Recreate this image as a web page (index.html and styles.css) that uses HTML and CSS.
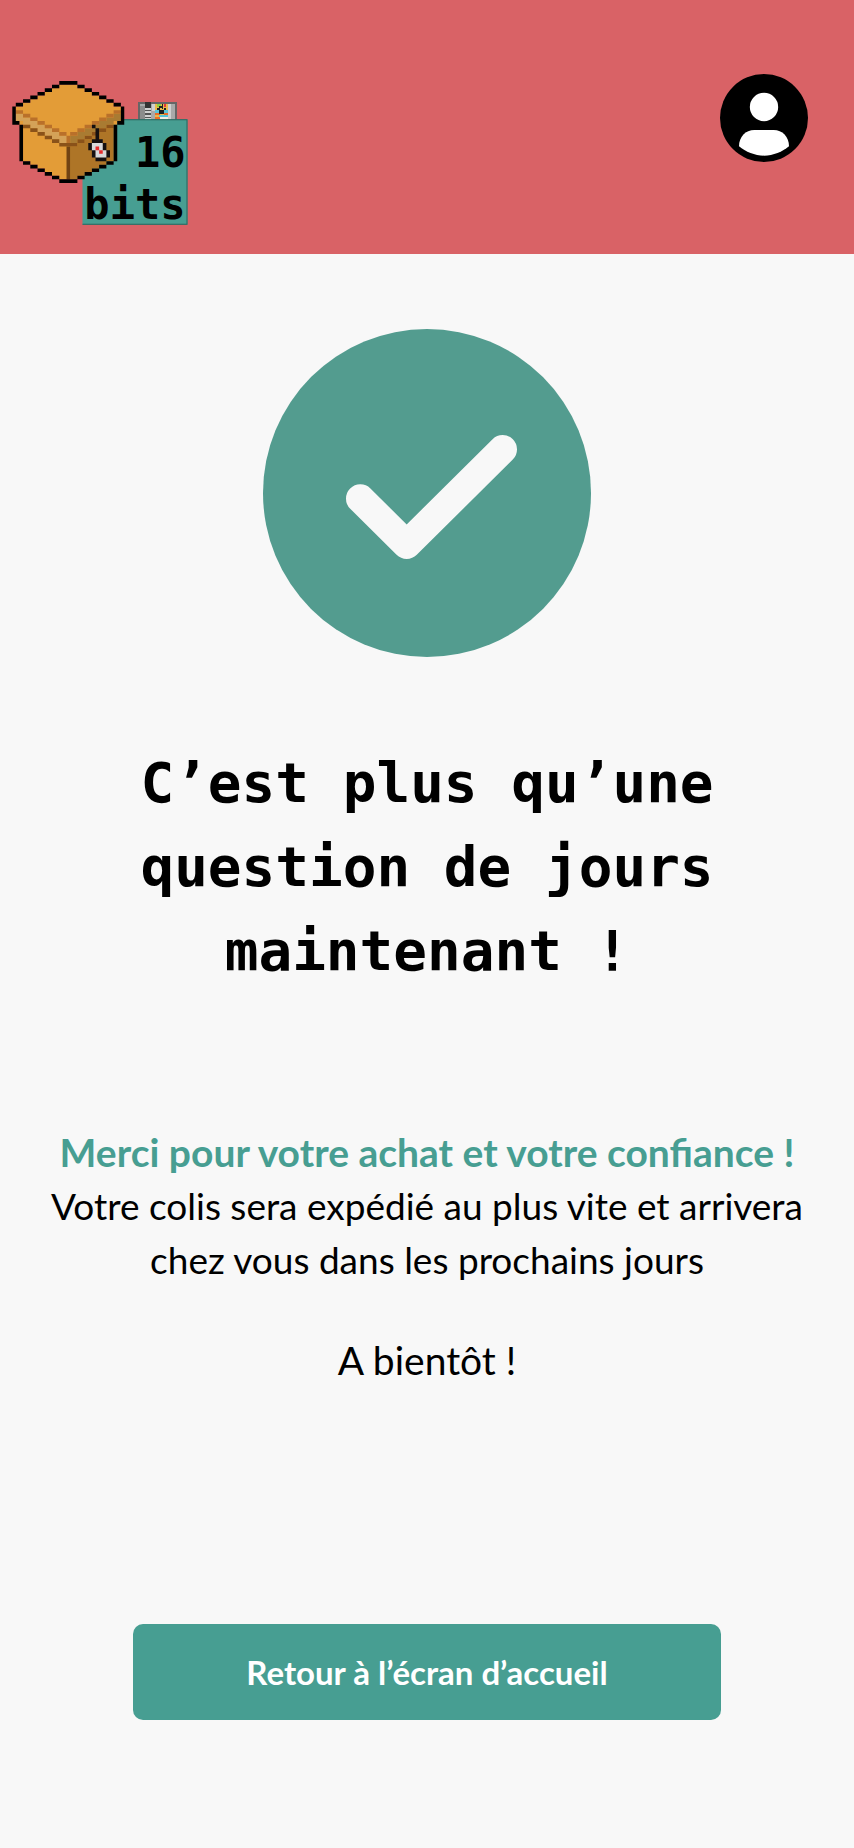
FILE: index.html
```html
<!DOCTYPE html>
<html lang="fr">
<head>
<meta charset="utf-8">
<meta name="viewport" content="width=device-width, initial-scale=1">
<title>Commande confirmée</title>
<link rel="stylesheet" href="styles.css">
</head>
<body>
<header class="header">
  <a class="logo" href="#" aria-label="16 bits, accueil">
    <svg class="logo-art" viewBox="35 33 527 432">
      <!-- cartridge -->
      <g shape-rendering="crispEdges">
        <path fill="#666" d="M413 96h115v53H413z"/>
        <path fill="#a9a9a9" d="M419 102h103v47H419z"/>
        <path fill="#8c8c8c" d="M419 108h13v41h-13z"/>
        <path fill="#d0d0d0" d="M432 113h18v36h-18zM503 102h7v47h-7zM453 102h10v20h-10z"/>
        <path fill="#333" d="M432 96h18v17h-18z"/>
        <path fill="#555" d="M432 120h18v4h-18zM432 130h18v4h-18zM432 140h18v4h-18z"/>
        <path fill="#e9b949" d="M464 102h38v47h-38z"/>
        <path fill="#8fd13f" d="M470 102h12v8h-12z"/>
        <path fill="#e33b3b" d="M489 102h8v8h-8z"/>
        <path fill="#58c3d8" d="M464 120h12v12h-12zM489 121h13v7h-13zM476 134h26v6h-26z"/>
        <path fill="#eb6d28" d="M464 130h14v6h-14zM464 142h13v7h-13zM490 129h12v5h-12z"/>
        <path fill="#f0ede5" d="M478 142h24v7h-24z"/>
        <path fill="#1d2224" d="M476 107h7v8h-7zM483 102h5v14h-5zM470 115h7v5h-7zM476 120h13v13h-13zM489 114h8v7h-8z"/>
      </g>
      <path fill="#479e92" d="M246 148h315v316H246z"/>
      <path fill="#29665e" d="M246 148h315v3H246zM246 461h315v3H246zM558 148h3v316h-3z"/>
      <!-- box, 31 by 28 cells -->
      <svg x="35" y="33" width="337" height="306" viewBox="0 0 31 28" preserveAspectRatio="none">
        <path fill="#e39c37" d="M13 1h5v1h2v1h2v1h2v1h2v1h2v1h2v4h-1v1h-1v10h-2v1h-2v1h-2v1h-2v1h-2v1h-5v-1h-2v-1H9v-1H7v-1H5v-1H3V12H2v-1H1V7h2V6h2V5h2V4h2V3h2V2h2z"/>
        <path fill="#ae7527" d="M16 18h2v-1h2v-1h2v-1h2v-1h2v-1h2v9h-2v1h-2v1h-2v1h-2v1h-2v1h-2z"/>
        <path fill="#d4a258" d="M1 9h2v1h2v1h2v1h2v1h2v1h2v1h2v2h-2v-1h-2v-1H9v-1H7v-1H5v-1H3v-1H1z"/>
        <path fill="#d4a258" d="M13 15h2v2h-2z"/>
        <path fill="#a97b32" d="M30 9h-2v1h-2v1h-2v1h-2v1h-2v1h-2v1h-2v2h2v-1h2v-1h2v-1h2v-1h2v-1h2v-1h2z"/>
        <path fill="#b9702a" d="M1 8h2v1H1zM3 9h2v1H3zM5 10h2v1H5zM7 11h2v1H7zM9 12h2v1H9zM11 13h2v1h-2zM13 14h2v1h-2zM15 15h1v2h-1zM16 14h2v1h-2zM18 13h2v1h-2zM20 12h2v1h-2zM22 11h2v1h-2zM24 10h2v1h-2zM26 9h2v1h-2zM28 8h2v1h-2z"/>
        <path fill="#8a5219" d="M3 12h2v1H3zM5 13h2v1H5zM7 14h2v1H7zM9 15h2v1H9zM11 16h2v1h-2zM13 17h5v1h-5zM18 16h2v1h-2zM20 15h2v1h-2zM22 14h2v1h-2zM24 13h2v1h-2zM26 12h2v1h-2z"/>
        <path fill="#714313" d="M15 18h1v9h-1z"/>
        <path d="M13 0h5v1h-5zM11 1h2v1h-2zM18 1h2v1h-2zM9 2h2v1H9zM20 2h2v1h-2zM7 3h2v1H7zM22 3h2v1h-2zM5 4h2v1H5zM24 4h2v1h-2zM3 5h2v1H3zM26 5h2v1h-2zM1 6h2v1H1zM28 6h2v1h-2zM0 7h1v4h1v1H0zM30 7h1v5h-2v-1h1zM2 12h1v10H2zM28 12h1v10h-1zM3 22h2v1H3zM26 22h2v1h-2zM5 23h2v1H5zM24 23h2v1h-2zM7 24h2v1H7zM22 24h2v1h-2zM9 25h2v1H9zM20 25h2v1h-2zM11 26h2v1h-2zM18 26h2v1h-2zM13 27h5v1h-5z"/>
        <path fill="#151010" d="M22 12h1v1h1v3h1v1h1v2h1v2h-1v1h-3v-1h-1v-2h-1v-2h1v-1h1v-3h-1z"/>
        <path fill="#d9d9d9" d="M22 17h3v2h1v2h-3v-2h-1z"/>
        <path fill="#e52d2d" d="M23 18h1v1h1v1h-1v-1h-1z"/>
      </svg>
      <text class="logo-text" x="555" y="290" text-anchor="end">16</text>
      <text class="logo-text" x="555" y="446" text-anchor="end">bits</text>
    </svg>
  </a>
  <button class="account" type="button" aria-label="Mon compte">
    <svg class="account-icon" viewBox="0 0 264 264">
      <circle cx="132" cy="132" r="132"/>
      <circle cx="132" cy="99" r="42.500" fill="#fff"/>
      <path fill="#fff" d="M103 168h58c26 0 46 20 46 49-20 17-47 28-75 28s-55-11-75-28c0-29 20-49 46-49z"/>
    </svg>
  </button>
</header>
<main class="main">
  <svg class="check" viewBox="0 0 984 984" role="img" aria-label="Commande validée">
    <circle cx="492" cy="492" r="492" fill="#539c8f"/>
    <path d="M292 509 431 647 719 361" fill="none" stroke="#f8f8f8" stroke-width="86" stroke-linecap="round" stroke-linejoin="round"/>
  </svg>
  <h1 class="title">C’est plus qu’une question de jours maintenant !</h1>
  <div class="message">
    <p class="thanks">Merci pour votre achat et votre confiance !</p>
    <p>Votre colis sera expédié au plus vite et arrivera chez vous dans les prochains jours</p>
  </div>
  <p class="goodbye">A bientôt !</p>
  <a class="home-button" href="#">Retour à l’écran d’accueil</a>
</main>
</body>
</html>
```
FILE: styles.css
```css
* {
  box-sizing: border-box;
}

body {
  margin: 0;
  background: #f8f8f8;
  color: #000;
  font-family: Lato, "Open Sans", sans-serif;
}

.header {
  display: flex;
  justify-content: space-between;
  align-items: flex-start;
  padding: 74px 46px 29px 12px;
  background: #d96266;
}

.logo {
  display: block;
  padding-top: 7px;
}

.logo-art {
  display: block;
  width: 176px;
  height: 144px;
}

.logo-text {
  font: bold 126px "DejaVu Sans Mono", monospace;
  fill: #000;
}

.account {
  padding: 0;
  border: 0;
  background: none;
  cursor: pointer;
}

.account-icon {
  display: block;
  width: 88px;
  height: 88px;
}

.main {
  display: flex;
  flex-direction: column;
  align-items: center;
  padding: 75px 34px 128px;
  text-align: center;
}

.check {
  width: 328px;
  height: 328px;
}

.title {
  margin: 84px 0 0;
  font: bold 56px/84px "DejaVu Sans Mono", monospace;
}

.message {
  margin-top: 132px;
  font-size: 37px;
  line-height: 54px;
}

.message p {
  margin: 0;
}

.message .thanks {
  color: #479e92;
  font-size: 39px;
  font-weight: 700;
}

.goodbye {
  margin: 46px 0 0;
  font-size: 39px;
  line-height: 54px;
}

.home-button {
  width: 588px;
  max-width: 100%;
  margin-top: 237px;
  padding: 24px;
  border-radius: 10px;
  background: #479e92;
  color: #fff;
  font-size: 33px;
  font-weight: 700;
  line-height: 48px;
  text-decoration: none;
}
```
